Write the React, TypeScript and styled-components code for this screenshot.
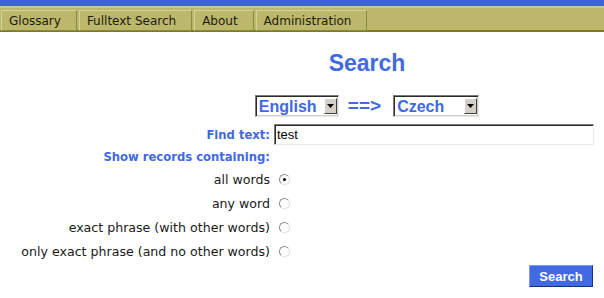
import React, { useState } from 'react';
import styled, { createGlobalStyle } from 'styled-components';

const GlobalStyle = createGlobalStyle`
    html, body {
        margin: 0;
        padding: 0;
        background: #ffffff;
        font-family: "DejaVu Sans", Verdana, sans-serif;
    }
`;

const blue = '#4169e1';

const Page = styled.div`
    width: 604px;
`;

const TopStripe = styled.div`
    height: 6px;
    background: #3d63dc;
    border-bottom: 2px solid #c9c6a0;
`;

const MenuBar = styled.nav`
    display: flex;
    gap: 2px;
    height: 24px;
    padding: 2px 0 0 1px;
    box-sizing: border-box;
    background: #bdb76b;
    border-bottom: 2px solid #7d7a22;
`;

const Tab = styled.a`
    display: flex;
    align-items: center;
    height: 21px;
    box-sizing: border-box;
    padding: 0 15px 0 7px;
    font-size: 12px;
    color: #1c1c10;
    background: #bdb76b;
    border: 1px solid;
    border-color: #d6d29a #8c8840 #8c8840 #d6d29a;
    cursor: pointer;
`;

const Header = styled.div`
    padding-left: 130px;
    text-align: center;
`;

const Title = styled.h1`
    margin: 18px 0 0;
    font-family: "Liberation Sans", Arial, sans-serif;
    font-size: 23px;
    line-height: 26px;
    font-weight: bold;
    color: ${blue};
`;

const LangRow = styled.div`
    display: flex;
    justify-content: center;
    align-items: center;
    margin-top: 19px;
    height: 22px;
`;

const Arrow = styled.span`
    margin: 0 12px 0 9px;
    font-family: "Liberation Sans", Arial, sans-serif;
    font-size: 19px;
    font-weight: bold;
    color: ${blue};
`;

const SelectBox = styled.div<{ $width: number }>`
    position: relative;
    width: ${(p) => p.$width}px;
    height: 22px;
`;

const Select = styled.select`
    appearance: none;
    display: block;
    width: 100%;
    height: 22px;
    margin: 0;
    padding: 0 0 0 3px;
    box-sizing: border-box;
    font-family: "Liberation Sans", Arial, sans-serif;
    font-size: 16px;
    font-weight: bold;
    color: ${blue};
    background: #fff;
    border: 1px solid;
    border-color: #7a7a7a #e8e8e8 #e8e8e8 #7a7a7a;
    box-shadow: inset 1px 1px 0 #2c2c2c, inset -1px -1px 0 #d4d0c8;
    border-radius: 0;
    outline: none;
`;

const DropButton = styled.span`
    position: absolute;
    top: 3px;
    right: 2px;
    width: 13px;
    height: 16px;
    box-sizing: border-box;
    display: flex;
    align-items: center;
    justify-content: center;
    background: #d4d0c8;
    border: 1px solid;
    border-color: #ffffff #404040 #404040 #ffffff;
    pointer-events: none;
`;

const Form = styled.form`
    display: grid;
    grid-template-columns: 270px 320px;
    column-gap: 4px;
    margin-top: 6px;
`;

const Label = styled.label<{ $strong?: boolean; $height?: number }>`
    display: flex;
    align-items: center;
    justify-content: flex-end;
    height: ${(p) => p.$height ?? 24}px;
    font-size: ${(p) => (p.$strong ? 11.6 : 12.6)}px;
    font-weight: ${(p) => (p.$strong ? 'bold' : 'normal')};
    color: ${(p) => (p.$strong ? blue : '#1a1a1a')};
    white-space: nowrap;
`;

const Cell = styled.div<{ $height?: number }>`
    display: flex;
    align-items: center;
    height: ${(p) => p.$height ?? 24}px;
`;

const TextInput = styled.input`
    width: 320px;
    height: 21px;
    box-sizing: border-box;
    margin: 0;
    padding: 0 2px;
    font-family: "Liberation Sans", Arial, sans-serif;
    font-size: 13px;
    color: #000;
    border: 1px solid;
    border-color: #7a7a7a #e8e8e8 #e8e8e8 #7a7a7a;
    box-shadow: inset 1px 1px 0 #2c2c2c;
    outline: none;
`;

const Radio = styled.span<{ $checked: boolean }>`
    position: relative;
    width: 11px;
    height: 11px;
    margin-left: 5px;
    box-sizing: border-box;
    border-radius: 50%;
    border: 1px solid;
    border-color: #8a8a8a #e0e0e0 #e0e0e0 #8a8a8a;
    background: #fff;
    cursor: pointer;

    &::after {
        content: '';
        display: ${(p) => (p.$checked ? 'block' : 'none')};
        position: absolute;
        top: 3px;
        left: 3px;
        width: 3px;
        height: 3px;
        border-radius: 50%;
        background: #000;
    }
`;

const ButtonRow = styled.div`
    grid-column: 2;
    display: flex;
    justify-content: flex-end;
    margin-top: 2px;
    padding-right: 1px;
`;

const SearchButton = styled.button`
    width: 64px;
    height: 22px;
    padding: 0;
    font-family: "Liberation Sans", Arial, sans-serif;
    font-size: 13px;
    font-weight: bold;
    color: #fff;
    background: ${blue};
    border: 1px solid;
    border-color: #7f9af0 #1b2f80 #1b2f80 #7f9af0;
    cursor: pointer;
`;

const tabs = ['Glossary', 'Fulltext Search', 'About', 'Administration'];

const modes = [
    'all words',
    'any word',
    'exact phrase (with other words)',
    'only exact phrase (and no other words)',
];

const ArrowDown = () => (
    <svg width="7" height="4" viewBox="0 0 7 4">
        <path d="M0 0h7L3.5 4z" fill="#000" />
    </svg>
);

const LangSelect = ({ width, value, options }: { width: number; value: string; options: string[] }) => (
    <SelectBox $width={width}>
        <Select defaultValue={value}>
            {options.map((o) => (
                <option key={o}>{o}</option>
            ))}
        </Select>
        <DropButton>
            <ArrowDown />
        </DropButton>
    </SelectBox>
);

const App: React.FC = () => {
    const [mode, setMode] = useState(0);
    const [text, setText] = useState('test');

    return (
        <Page>
            <GlobalStyle />
            <TopStripe />
            <MenuBar>
                {tabs.map((t) => (
                    <Tab key={t}>{t}</Tab>
                ))}
            </MenuBar>

            <Header>
                <Title>Search</Title>
                <LangRow>
                    <LangSelect width={84} value="English" options={['English', 'Czech']} />
                    <Arrow>==&gt;</Arrow>
                    <LangSelect width={86} value="Czech" options={['Czech', 'English']} />
                </LangRow>
            </Header>

            <Form onSubmit={(e) => e.preventDefault()}>
                <Label $strong $height={23} htmlFor="find">
                    Find text:
                </Label>
                <Cell $height={23}>
                    <TextInput id="find" value={text} onChange={(e) => setText(e.target.value)} />
                </Cell>

                <Label $strong $height={21}>
                    Show records containing:
                </Label>
                <Cell $height={21} />

                {modes.map((m, i) => (
                    <React.Fragment key={m}>
                        <Label onClick={() => setMode(i)}>{m}</Label>
                        <Cell>
                            <Radio $checked={mode === i} onClick={() => setMode(i)} />
                        </Cell>
                    </React.Fragment>
                ))}

                <ButtonRow>
                    <SearchButton type="submit">Search</SearchButton>
                </ButtonRow>
            </Form>
        </Page>
    );
};

export default App;
